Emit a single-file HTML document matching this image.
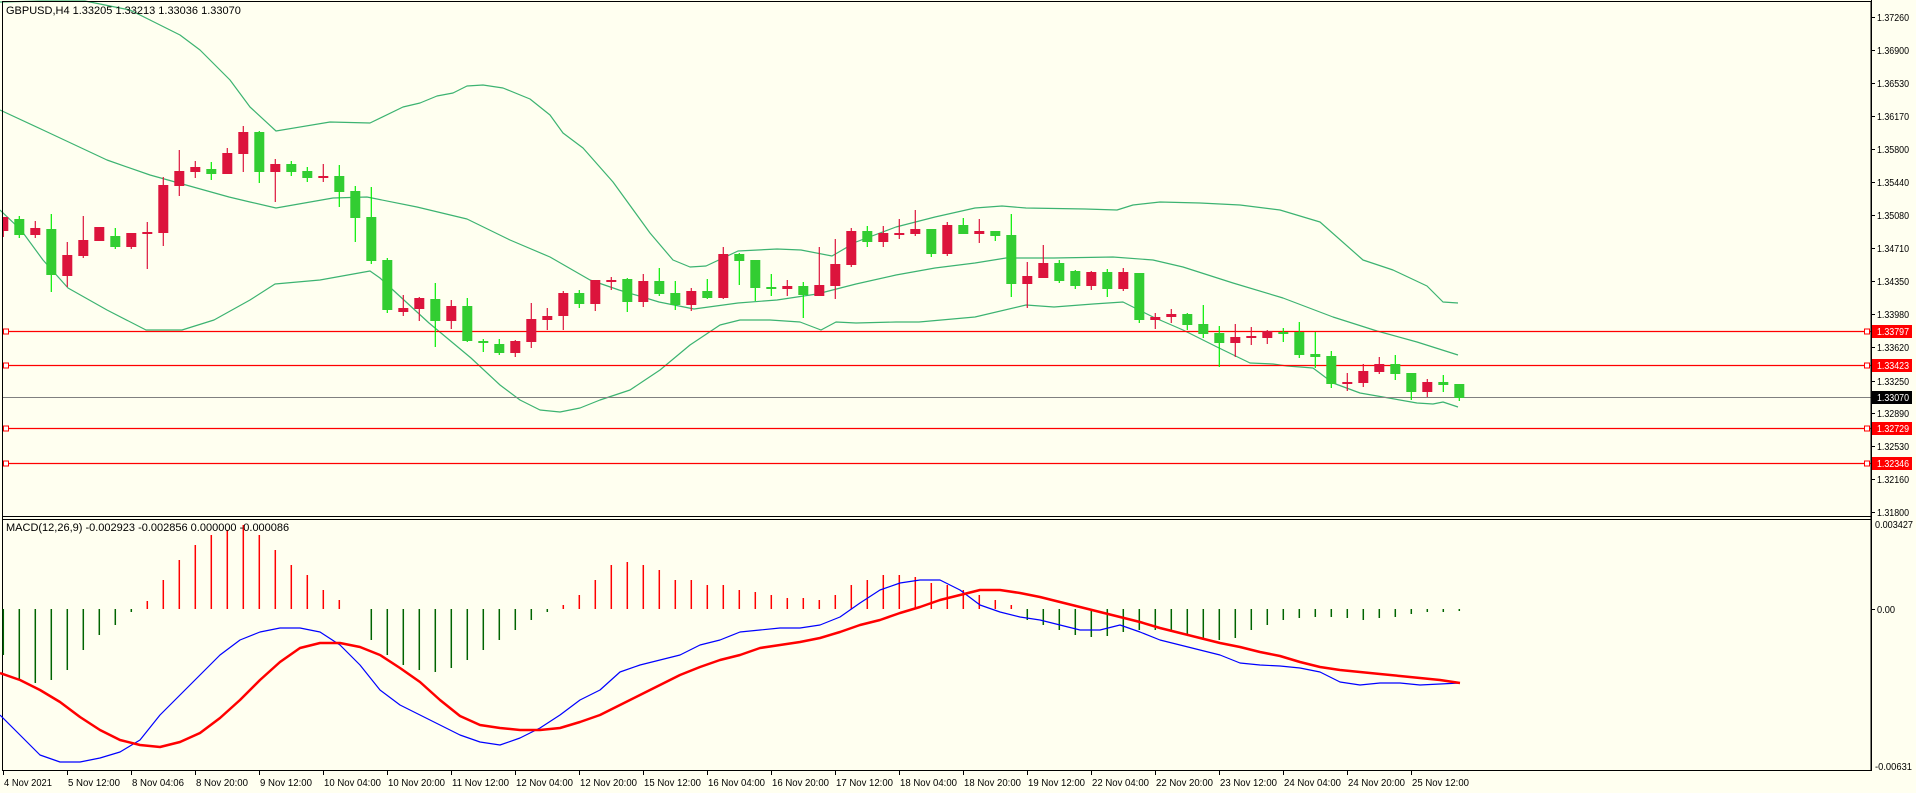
<!DOCTYPE html>
<html><head><meta charset="utf-8"><style>
html,body{margin:0;padding:0;background:#fffff0;width:1916px;height:793px;overflow:hidden}
svg{display:block}
text{font-family:"Liberation Sans",sans-serif;font-size:11px}
.ax{font-size:10px}
</style></head><body>
<svg id="s" width="1916" height="793" xmlns="http://www.w3.org/2000/svg"></svg>
<script>
var s=document.getElementById('s'),h='';
h+='<rect x="0" y="0" width="1916" height="793" fill="#fffff0"/>';
function pl(pts,c,w){h+='<polyline fill="none" stroke="'+c+'" stroke-width="'+w+'" stroke-linejoin="round" points="'+pts+'"/>';}
var up="0,2 40,1 85,1 130,10 160,25 180,35 200,50 230,80 250,107 276,131 330,122 370,123 403,107 420,103 437,96 453,93 467,86 483,85 503,88 530,99 550,115 563,133 583,148 613,182 650,233 673,260 690,267 706,266 738,251 777,249 801,250 832,256 856,242 896,227 935,217 975,208 1002,206 1026,208 1085,209 1117,210 1133,205 1160,202 1200,203 1240,205 1280,210 1320,222 1363,260 1393,270 1427,286 1443,302 1458,303";
var mid="0,110 43,130 107,160 150,175 186,185 229,197 250,202 276,208 333,198 367,197 417,207 467,219 510,240 550,257 590,280 619,290 659,302 694,309 738,303 777,300 817,294 856,284 896,275 935,268 975,263 1006,258 1054,258 1113,257 1153,260 1183,267 1233,283 1283,298 1333,317 1377,331 1417,342 1458,355";
var lo="0,210 21,230 43,260 68,288 107,310 146,330 182,330 214,320 250,300 275,284 320,280 370,271 380,278 393,290 429,323 471,358 500,385 520,400 540,410 560,412 580,408 600,400 630,390 660,370 690,345 720,325 740,320 770,320 800,322 821,330 836,322 856,323 896,322 919,322 975,317 1026,305 1054,307 1093,304 1123,302 1153,317 1183,330 1217,347 1250,363 1273,364 1287,366 1313,368 1333,383 1360,393 1383,397 1417,403 1433,404 1443,402 1458,407";
pl(up,'#3cb371',1.2);pl(mid,'#3cb371',1.2);pl(lo,'#3cb371',1.2);
[[331,'#ff0000'],[365,'#ff0000'],[428,'#ff0000'],[463,'#ff0000']].forEach(function(a){
h+='<line x1="2" x2="1871" y1="'+(a[0]+.5)+'" y2="'+(a[0]+.5)+'" stroke="'+a[1]+'" stroke-width="1.3"/>';
h+='<rect x="3.5" y="'+(a[0]-2)+'" width="5" height="5" fill="#fff" stroke="#f00"/>';
h+='<rect x="1864.5" y="'+(a[0]-2)+'" width="5" height="5" fill="#fff" stroke="#f00"/>';});
h+='<line x1="2" x2="1871" y1="397.5" y2="397.5" stroke="#808080"/>';
var C=[[217,231,217,237,'r'],[219,235,216,238,'g'],[228,235,221,238,'r'],[229,275,214,292,'g'],[255,276,242,287,'r'],[240,256,216,258,'r'],[227,241,227,241,'r'],[236,247,228,249,'g'],[233,247,233,249,'r'],[232,234,222,269,'r'],
[185,233,177,246,'r'],[171,186,150,196,'r'],[167,172,161,178,'r'],[169,174,162,180,'g'],[153,174,148,174,'r'],[132,154,126,172,'r'],[132,172,131,183,'g'],[164,172,159,202,'r'],[164,172,161,176,'g'],[171,178,167,182,'g'],
[176,178,164,182,'r'],[176,192,165,207,'g'],[191,218,186,242,'g'],[217,261,187,264,'g'],[260,310,258,313,'g'],[308,312,295,316,'r'],[298,309,297,321,'r'],[299,321,283,347,'g'],[306,321,300,329,'r'],[306,341,298,342,'g'],
[341,343,339,352,'g'],[344,353,339,355,'g'],[341,353,340,357,'r'],[319,342,303,348,'r'],[316,320,308,330,'r'],[293,316,291,330,'r'],[293,304,290,308,'g'],[280,304,280,311,'r'],[280,281,277,290,'r'],[279,302,278,312,'g'],
[281,302,274,307,'r'],[281,294,268,296,'g'],[293,305,281,310,'g'],[291,305,288,311,'r'],[291,298,279,299,'g'],[254,298,247,299,'r'],[254,261,253,285,'g'],[260,288,260,301,'g'],[287,289,274,296,'g'],[286,289,280,296,'r'],
[286,295,282,318,'g'],[285,296,247,296,'r'],[264,286,239,299,'r'],[231,265,228,267,'r'],[231,242,226,247,'g'],[233,242,226,247,'r'],[233,234,219,239,'r'],[229,234,210,236,'r'],[229,254,229,257,'g'],[225,254,222,256,'r'],
[225,234,218,234,'g'],[231,234,219,243,'r'],[231,236,231,241,'g'],[235,284,214,297,'g'],[276,284,262,308,'r'],[263,278,245,278,'r'],[263,281,260,283,'g'],[271,286,270,289,'g'],[272,286,271,290,'r'],[272,289,269,297,'g'],
[272,289,268,291,'r'],[273,320,273,323,'g'],[317,320,313,329,'r'],[314,317,309,323,'r'],[314,325,313,330,'g'],[324,334,305,338,'g'],[333,343,326,367,'g'],[337,343,324,357,'r'],[336,338,327,345,'r'],[331,338,330,344,'r'],
[332,333,328,342,'g'],[332,355,322,358,'g'],[354,357,332,368,'g'],[356,384,351,388,'g'],[382,384,373,391,'r'],[371,383,364,387,'r'],[364,372,357,374,'r'],[364,374,355,380,'g'],[373,392,373,400,'g'],[382,392,379,397,'r'],
[382,385,375,392,'g'],[384,398,384,401,'g']];
C.forEach(function(c,i){var x=3.3+16*i;var bc=c[4]=='r'?'#dc143c':'#32cd32',wc=c[4]=='r'?'#dc143c':'#00ee00';
h+='<line x1="'+x+'" x2="'+x+'" y1="'+c[2]+'" y2="'+c[3]+'" stroke="'+wc+'" stroke-width="1.2"/>';
var bh=Math.max(c[1]-c[0],2);var bx=Math.max(x-5,2);h+='<rect x="'+bx+'" y="'+c[0]+'" width="'+(x+5-bx)+'" height="'+bh+'" fill="'+bc+'"/>';});
h+='<rect x="2.5" y="1.5" width="1868.5" height="769" fill="none" stroke="#000"/>';
h+='<line x1="2" x2="1871" y1="516.5" y2="516.5" stroke="#000"/><line x1="2" x2="1871" y1="519.5" y2="519.5" stroke="#000"/>';
h+='<line x1="1871.5" x2="1871.5" y1="0" y2="771" stroke="#000"/>';
function tl(x,y,t,w,fill){return '<text class="ax" x="'+x+'" y="'+y+'" textLength="'+w+'" lengthAdjust="spacingAndGlyphs"'+(fill?' fill="'+fill+'"':'')+'>'+t+'</text>';}
var P=['1.37260','1.36900','1.36530','1.36170','1.35800','1.35440','1.35080','1.34710','1.34350','1.33980','1.33620','1.33250','1.32890','1.32530','1.32160','1.31800'];
P.forEach(function(p){var y=Math.round(17+(1.3726-parseFloat(p))*9066);h+='<line x1="1871" x2="1875" y1="'+(y+.5)+'" y2="'+(y+.5)+'" stroke="#000"/>'+tl(1877,y+4,p,32);});
[[331,'1.33797','#ff0000'],[365,'1.33423','#ff0000'],[397,'1.33070','#000'],[428,'1.32729','#ff0000'],[463,'1.32346','#ff0000']].forEach(function(a){
h+='<rect x="1872" y="'+(a[0]-6)+'" width="40" height="13" fill="'+a[2]+'"/>'+tl(1877,a[0]+4,a[1],32,'#fff');});
h+=tl(1875,528,'0.003427',38)+'<line x1="1871" x2="1875" y1="609.5" y2="609.5" stroke="#000"/>'+tl(1877,613,'0.00',18)+tl(1875,770,'-0.00631',37);
var H=[655,680,683,680,670,650,635,625,612,601,580,560,545,535,530,525,535,550,565,575,590,600,609,640,655,665,670,672,668,660,650,640,630,620,612,605,595,580,565,562,565,570,580,580,585,585,590,592,595,598,598,600,595,585,580,575,575,577,583,585,590,595,600,605,620,625,630,635,637,636,632,630,630,632,635,640,640,638,630,625,620,618,617,617,618,620,618,617,614,612,612,611];
H.forEach(function(v,i){var x=3.3+16*i;if(Math.abs(v-609)<1)return;var c=v<609?'#ff0000':'#006400';h+='<line x1="'+x+'" x2="'+x+'" y1="609" y2="'+v+'" stroke="'+c+'" stroke-width="1.5"/>';});
pl("0,715 20,735 40,755 60,762 80,762 100,758 120,752 140,740 160,715 180,695 200,675 220,655 240,640 260,632 280,628 300,628 320,632 340,645 360,665 380,690 400,705 420,715 440,725 460,735 480,742 500,745 520,738 540,728 560,715 580,700 600,690 620,672 640,665 660,660 680,655 700,645 720,640 740,632 760,630 780,628 800,628 820,625 840,617 860,603 880,590 900,583 920,580 940,580 960,590 980,605 1000,612 1020,617 1040,620 1060,625 1080,630 1100,630 1120,625 1140,632 1160,640 1180,645 1200,650 1220,655 1240,663 1260,665 1280,666 1300,668 1320,672 1340,682 1360,685 1380,683 1400,683 1420,685 1440,684 1460,683",'#0000ff',1.2);
pl("0,673 20,680 40,690 60,702 80,717 100,730 120,740 140,745 160,747 180,742 200,733 220,718 240,700 260,680 280,662 300,648 320,643 340,643 360,647 380,655 400,668 420,682 440,700 460,716 480,725 500,728 520,730 540,730 560,728 580,722 600,715 620,705 640,695 660,685 680,675 700,667 720,660 740,655 760,648 780,645 800,642 820,638 840,632 860,625 880,620 900,613 920,607 940,600 960,595 980,590 1000,590 1020,593 1040,597 1060,602 1080,607 1100,612 1120,617 1140,622 1160,628 1180,633 1200,638 1220,643 1240,647 1260,652 1280,656 1300,662 1320,667 1340,670 1360,672 1380,674 1400,676 1420,678 1440,680 1460,683",'#ff0000',2.5);
var T=['4 Nov 2021','5 Nov 12:00','8 Nov 04:06','8 Nov 20:00','9 Nov 12:00','10 Nov 04:00','10 Nov 20:00','11 Nov 12:00','12 Nov 04:00','12 Nov 20:00','15 Nov 12:00','16 Nov 04:00','16 Nov 20:00','17 Nov 12:00','18 Nov 04:00','18 Nov 20:00','19 Nov 12:00','22 Nov 04:00','22 Nov 20:00','23 Nov 12:00','24 Nov 04:00','24 Nov 20:00','25 Nov 12:00'];
T.forEach(function(t,i){var x=3+64*i;h+='<line x1="'+(x+.5)+'" x2="'+(x+.5)+'" y1="771" y2="775" stroke="#000"/>'+tl(x+1,786,t,Math.round(t.length*4.75));});
h+='<text x="6" y="14">GBPUSD,H4  1.33205 1.33213 1.33036 1.33070</text>';
h+='<text x="6" y="531">MACD(12,26,9) -0.002923 -0.002856 0.000000 -0.000086</text>';
s.innerHTML=h;
</script>
</body></html>
